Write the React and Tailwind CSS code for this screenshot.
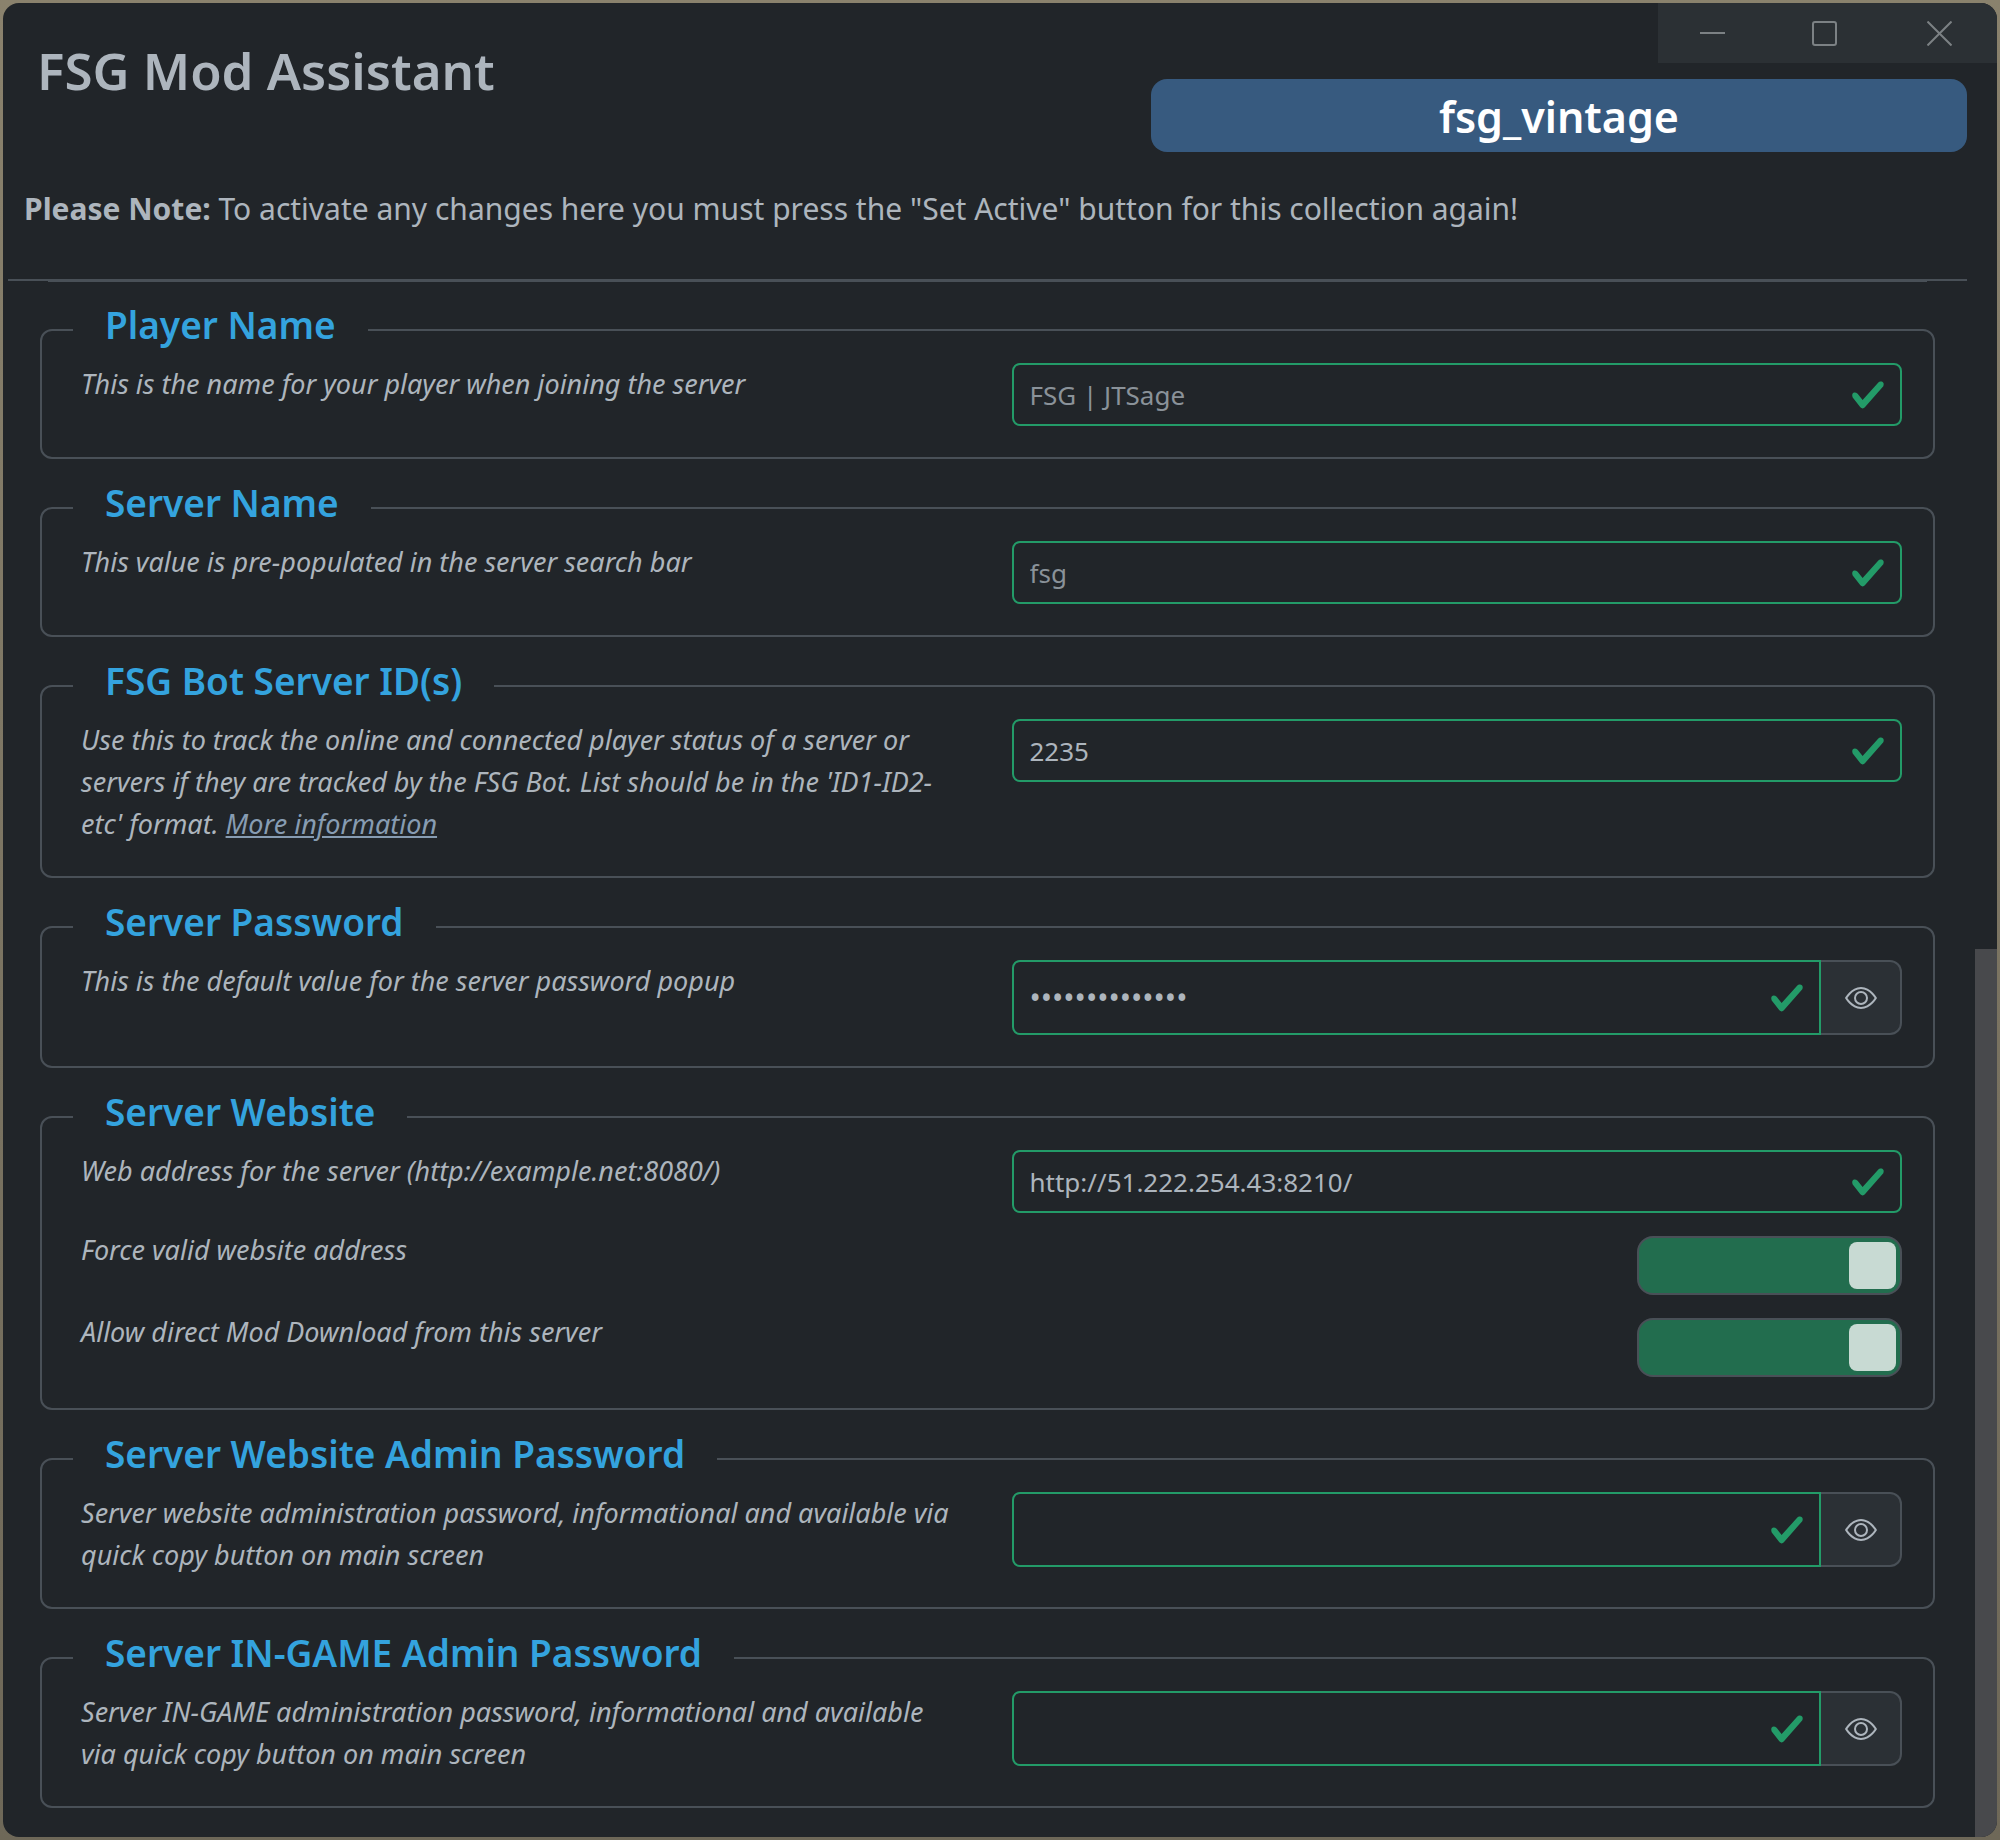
import React, { useState } from "react";

function Check() {
  return (
    <svg className="pointer-events-none absolute top-1/2 right-4 h-9 w-9 -translate-y-1/2" viewBox="0 0 8 8" aria-hidden="true">
      <path
        fill="#239b68"
        d="M2.3 6.73.6 4.53c-.4-1.04.46-1.4 1.1-.8l1.1 1.4 3.4-3.8c.6-.63 1.6-.27 1.2.7l-4 4.6c-.43.5-.8.4-1.1.1z"
      />
    </svg>
  );
}

function Eye() {
  return (
    <svg className="h-8 w-8" viewBox="0 0 16 16" fill="#adb5bd" aria-hidden="true">
      <path d="M16 8s-3-5.5-8-5.5S0 8 0 8s3 5.5 8 5.5S16 8 16 8M1.173 8a13 13 0 0 1 1.66-2.043C4.12 4.668 5.88 3.5 8 3.5s3.879 1.168 5.168 2.457A13 13 0 0 1 14.828 8q-.086.13-.195.288c-.335.48-.83 1.12-1.465 1.755C11.879 11.332 10.119 12.5 8 12.5s-3.879-1.168-5.168-2.457A13 13 0 0 1 1.172 8z" />
      <path d="M8 5.5a2.5 2.5 0 1 0 0 5 2.5 2.5 0 0 0 0-5M4.5 8a3.5 3.5 0 1 1 7 0 3.5 3.5 0 0 1-7 0" />
    </svg>
  );
}

function Card({ title, children }) {
  return (
    <fieldset className="min-w-0 rounded-xl border-2 border-[#495057] pt-[3px] pr-[31px] pb-[31px] pl-[39px]">
      <legend className="-ml-2 px-8 pb-[10px] text-[37px] leading-[50px] font-semibold text-[#34a3de]">{title}</legend>
      <div className="flex flex-col gap-4">{children}</div>
    </fieldset>
  );
}

function Row({ id, text, link, children }) {
  return (
    <div className="grid grid-cols-2 gap-x-10">
      <div className="pr-3 text-[27px] leading-[42px] italic">
        <label htmlFor={id}>{text}</label>
        {link && (
          <>
            {" "}
            <a href="#more" className="text-[#879cb2] underline">
              {link}
            </a>
          </>
        )}
      </div>
      {children}
    </div>
  );
}

function TextField({ id, value, placeholder }) {
  return (
    <div className="relative self-start">
      <input
        id={id}
        type="text"
        defaultValue={value}
        placeholder={placeholder}
        className="block h-[63px] w-full rounded-lg border-2 border-[#239b68] bg-[#212529] pr-16 pl-4 text-[26px] placeholder:text-[#8a9299]"
      />
      <Check />
    </div>
  );
}

function PasswordField({ id, value }) {
  const [shown, setShown] = useState(false);
  return (
    <div className="flex h-[75px]">
      <div className="relative min-w-0 flex-1">
        <input
          id={id}
          type={shown ? "text" : "password"}
          defaultValue={value}
          className="block h-full w-full rounded-l-lg border-2 border-[#239b68] bg-[#212529] pr-16 pl-4 text-[30px]"
        />
        <Check />
      </div>
      <button
        type="button"
        aria-label="Show password"
        onClick={() => setShown(!shown)}
        className="flex w-[81px] items-center justify-center rounded-r-xl border-2 border-l-0 border-[#495057] bg-[#2b3035]"
      >
        <Eye />
      </button>
    </div>
  );
}

function Switch({ id }) {
  return (
    <div className="flex justify-end pt-[7px]">
      <input
        id={id}
        type="checkbox"
        role="switch"
        defaultChecked
        className="flex h-[59px] w-[265px] appearance-none items-center rounded-2xl border-2 border-[#495057] bg-[#2b3035] px-1 before:size-[47px] before:rounded-lg before:bg-[#c8dad3] checked:justify-end checked:bg-[#226d4e]"
      />
    </div>
  );
}

export default function App() {
  return (
    <div className="flex min-h-screen flex-col bg-linear-to-b from-[#8a826d] to-[#6e6858] p-[3px] font-['Noto_Sans','Open_Sans',sans-serif] text-[#adb5bd]">
      <div className="flex flex-1 flex-col overflow-hidden rounded-2xl bg-[#212529]">
        <header className="flex justify-between">
          <h1 className="pt-8 pl-[34px] text-[51px] leading-[70px] font-semibold">FSG Mod Assistant</h1>
          <div className="flex w-[846px] flex-col">
            <div className="grid h-[60px] w-[339px] grid-cols-[109px_1fr_1fr] self-end bg-[#2b3034] text-[#7c8184]">
              <button type="button" aria-label="Minimize" className="flex items-center justify-center">
                <svg className="h-[25px] w-[25px]" viewBox="0 0 25 25" fill="none" stroke="currentColor" strokeWidth="2">
                  <path d="M0 12h25" />
                </svg>
              </button>
              <button type="button" aria-label="Maximize" className="flex items-center justify-center">
                <svg className="h-[25px] w-[25px]" viewBox="0 0 25 25" fill="none" stroke="currentColor" strokeWidth="2">
                  <rect x="1" y="1" width="23" height="23" rx="2" />
                </svg>
              </button>
              <button type="button" aria-label="Close" className="flex items-center justify-center">
                <svg className="h-[25px] w-[25px]" viewBox="0 0 25 25" fill="none" stroke="currentColor" strokeWidth="2">
                  <path d="m.5.5 24 24M24.5.5l-24 24" />
                </svg>
              </button>
            </div>
            <div className="mt-4 mr-[30px] flex h-[73px] items-center justify-center rounded-2xl bg-[#375a7f] pt-[2px] text-[43px] leading-none font-semibold text-white">
              fsg_vintage
            </div>
          </div>
        </header>
        <p className="mt-[33px] pb-[46px] pl-[21px] text-[30px] leading-[48px]">
          <strong className="font-bold">Please Note:</strong> To activate any changes here you must press the "Set Active" button for this collection again!
        </p>
        <div className="flex flex-1">
          <main className="min-w-0 flex-1 pr-2 pb-6 pl-[5px]">
            <hr className="border-t-2 border-[#495057]" />
            <div className="mx-10 h-px bg-[#495057]" />
            <div className="mx-8 flex flex-col gap-[19px] pt-[18px]">
              <Card title="Player Name">
                <Row id="player" text="This is the name for your player when joining the server">
                  <TextField id="player" placeholder="FSG | JTSage" />
                </Row>
              </Card>
              <Card title="Server Name">
                <Row id="server" text="This value is pre-populated in the server search bar">
                  <TextField id="server" placeholder="fsg" />
                </Row>
              </Card>
              <Card title="FSG Bot Server ID(s)">
                <Row
                  id="bot"
                  text="Use this to track the online and connected player status of a server or servers if they are tracked by the FSG Bot. List should be in the 'ID1-ID2-etc' format."
                  link="More information"
                >
                  <TextField id="bot" value="2235" />
                </Row>
              </Card>
              <Card title="Server Password">
                <Row id="password" text="This is the default value for the server password popup">
                  <PasswordField id="password" value="abcdefghijklmn" />
                </Row>
              </Card>
              <Card title="Server Website">
                <Row id="website" text="Web address for the server (http://example.net:8080/)">
                  <TextField id="website" value="http://51.222.254.43:8210/" />
                </Row>
                <Row id="force" text="Force valid website address">
                  <Switch id="force" />
                </Row>
                <Row id="download" text="Allow direct Mod Download from this server">
                  <Switch id="download" />
                </Row>
              </Card>
              <Card title="Server Website Admin Password">
                <Row id="webadmin" text="Server website administration password, informational and available via quick copy button on main screen">
                  <PasswordField id="webadmin" />
                </Row>
              </Card>
              <Card title="Server IN-GAME Admin Password">
                <Row id="gameadmin" text="Server IN-GAME administration password, informational and available via quick copy button on main screen">
                  <PasswordField id="gameadmin" />
                </Row>
              </Card>
            </div>
          </main>
          <div className="flex w-[22px] flex-col justify-end" aria-hidden="true">
            <div className="h-[57%] bg-[#48494c]" />
          </div>
        </div>
      </div>
    </div>
  );
}
